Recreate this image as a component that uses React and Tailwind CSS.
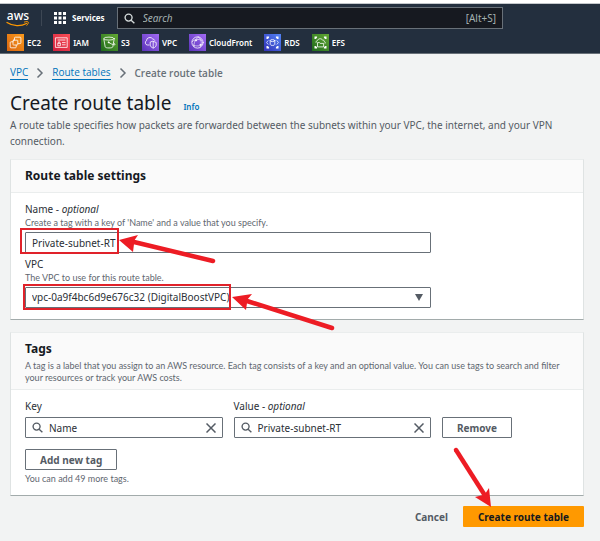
import React from "react";

const stroke = { fill: "none", stroke: "#fff", strokeWidth: 0.8, strokeLinecap: "round", strokeLinejoin: "round" };

function ServiceIcon({ from, to, id, children }) {
  return (
    <svg viewBox="0 0 17 17" className="size-[17px] shrink-0" aria-hidden="true">
      <defs>
        <linearGradient id={id} x1="0" y1="1" x2="1" y2="0">
          <stop offset="0" stopColor={from} />
          <stop offset="1" stopColor={to} />
        </linearGradient>
      </defs>
      <rect width="17" height="17" fill={`url(#${id})`} />
      <g {...stroke}>{children}</g>
    </svg>
  );
}

const corners = (
  <path
    fill="#fff"
    stroke="none"
    d="M2.5 2.5h2.6v1L4.4 4.4 3.5 5.1h-1zM14.5 2.5h-2.6v1l.7.9.9.7h1zM2.5 14.5h2.6v-1l-.7-.9-.9-.7h-1zM14.5 14.5h-2.6v-1l.7-.9.9-.7h1z"
  />
);

const services = [
  {
    name: "EC2",
    from: "#d8640f",
    to: "#fa9a1c",
    art: (
      <>
        <path d="M7.5 6V4a.8.8 0 0 1 .8-.8h4.800a.8.8 0 0 1 .8.8v4.800a.8.8 0 0 1-.8.8h-2" />
        <rect x="6" y="6.2" width="4.8" height="4.8" rx=".6" />
        <path d="M6 7.8H4a.8.8 0 0 0-.8.8V13a.8.8 0 0 0 .8.8h4.400a.8.8 0 0 0 .8-.8v-1.800" />
      </>
    ),
  },
  {
    name: "IAM",
    from: "#cf1f3c",
    to: "#fb4f57",
    art: (
      <>
        <rect x="2.8" y="3.8" width="11.4" height="9.6" />
        <path d="M5 6h7M9.4 8.6h2.8M9.4 10.8h2.8" />
        <path d="M4.8 11.4V9.2h2.6v2.2zM5.4 9.2v-.8a.7.7 0 0 1 1.4 0v.8" />
      </>
    ),
  },
  {
    name: "S3",
    from: "#1f6a1c",
    to: "#63a834",
    art: (
      <>
        <ellipse cx="8" cy="4.6" rx="5.2" ry="1.5" />
        <path d="M2.8 4.8l1.4 8.1c.3 1.4 7.3 1.4 7.6 0l1.4-8.1" />
        <path d="M7.6 8.4c2 1.4 4.6 2.4 6.2 2.4.8-.2-.2-1.4-1.2-2" />
        <circle cx="7.6" cy="8.3" r=".5" fill="#fff" />
      </>
    ),
  },
  {
    name: "VPC",
    from: "#5a32b8",
    to: "#a26bf5",
    art: (
      <>
        <path d="M7 11H5.200A2.300 2.300 0 0 1 4.400 6.800 3.500 3.500 0 0 1 10.800 5 2.300 2.300 0 0 1 12.800 6.400" />
        <path d="M11.200 7.300l3 1.200v2.500c0 1.500-1.400 2.400-3 3.200-1.600-.8-3-1.700-3-3.200V8.500z" />
        <path d="M11.200 7.600v6" />
      </>
    ),
  },
  {
    name: "CloudFront",
    from: "#5a32b8",
    to: "#a26bf5",
    art: (
      <>
        <circle cx="8.500" cy="8.500" r="5.600" />
        <path d="M3 7.800c2-2.600 7-3.400 9.600-1.200M5 12.800c-.4-3.600 1-7.600 4.400-9.800M9.500 3c3.400 3 3.600 7.400 1.500 10.400M4.200 11c3 1.600 7 1.300 9.600-1" strokeWidth=".6" />
        <circle cx="7" cy="6.500" r=".7" fill="#fff" strokeWidth=".4" />
        <circle cx="11.400" cy="10.800" r=".7" fill="#fff" strokeWidth=".4" />
      </>
    ),
  },
  {
    name: "RDS",
    from: "#3230b6",
    to: "#5285f5",
    art: (
      <>
        {corners}
        <ellipse cx="8.500" cy="6.600" rx="2.300" ry="1" />
        <path d="M6.200 6.600v3.800c0 1.400 4.600 1.400 4.600 0V6.600" />
        <path d="M4 6.800L2.600 8.500 4 10.200M13 6.800l1.400 1.700-1.400 1.700" strokeWidth=".7" />
      </>
    ),
  },
  {
    name: "EFS",
    from: "#1f6a1c",
    to: "#63a834",
    art: (
      <>
        {corners}
        <path d="M4 8.400c0-1.300.8-1.700 1.400-1.800C6 4.400 9.600 4 10.600 6.200c1.200-.2 1.700.5 1.800 1.500 1 .2 1 1 .8 1.500" />
        <path d="M5.500 12.500V8.600h2l.7.800h3.400v3.100z" />
      </>
    ),
  },
];

function AwsLogo() {
  return (
    <a href="#home" aria-label="AWS home" className="flex w-6 flex-col items-center">
      <span className="text-xs leading-[11px] font-medium text-white">aws</span>
      <svg viewBox="0 0 24 6" className="h-[6px] w-6" aria-hidden="true">
        <path d="M1 1.500C7 5.500 15 5.500 20.500 2.500" fill="none" stroke="#f90" strokeWidth="1.300" strokeLinecap="round" />
        <path d="M18.500 1c2-.6 3.400-.5 3.700 0s-.1 2-1.300 3.300" fill="none" stroke="#f90" strokeWidth="1" strokeLinecap="round" />
      </svg>
    </a>
  );
}

function SearchGlyph({ className }) {
  return (
    <svg viewBox="0 0 12 12" className={className} fill="none" stroke="currentColor" aria-hidden="true">
      <circle cx="5" cy="5" r="3.800" strokeWidth="1.500" />
      <path d="M7.800 7.800L11.300 11.300" strokeWidth="1.500" />
    </svg>
  );
}

function Chevron() {
  return (
    <svg viewBox="0 0 8 12" className="h-3 w-2 text-[#687078]" fill="none" stroke="currentColor" strokeWidth="1.500" aria-hidden="true">
      <path d="M1.500 1.500L6 6l-4.500 4.500" />
    </svg>
  );
}

function Arrow({ className, width, height, shaft, head }) {
  return (
    <svg
      viewBox={`0 0 ${width} ${height}`}
      width={width}
      height={height}
      className={`pointer-events-none absolute z-10 ${className}`}
      aria-hidden="true"
    >
      <path d={shaft} stroke="#ed1c24" strokeWidth="4.500" strokeLinecap="round" />
      <path d={head} fill="#ed1c24" />
    </svg>
  );
}

function Outline({ className }) {
  return <span className={`pointer-events-none absolute border-2 border-[#e0222a] ${className}`} />;
}

function Hint({ children }) {
  return <p className="font-['Lato',sans-serif] text-[9px] leading-[12px] text-[#5f6770]">{children}</p>;
}

function Card({ title, description, children }) {
  return (
    <section className="border border-x-[#dfe3e3] border-t-[#eaeded] border-b-[#a2abab] bg-white">
      <header className="border-b border-[#eaeded] bg-[#fafafa] px-3.5 py-[5px]">
        <h2 className="text-xs leading-[22px] font-bold text-[#16191f]">{title}</h2>
        {description && <Hint>{description}</Hint>}
      </header>
      <div className="px-3.5">{children}</div>
    </section>
  );
}

function TagInput({ id, label, value }) {
  return (
    <div className="min-w-0 flex-1">
      <label htmlFor={id} className="block text-[10px] leading-[16px] text-[#2a2f36]">
        {label}
      </label>
      <div className="mt-[3px] flex h-[21px] items-center rounded-[1px] border border-[#687078] bg-white px-1.5 text-[#545b64]">
        <SearchGlyph className="size-[11px] shrink-0" />
        <input id={id} defaultValue={value} className="ml-[6px] w-full min-w-0 flex-1 text-[10px] leading-[16px] text-[#2a2f36] outline-none" />
        <button type="button" aria-label={`Clear ${value}`} className="shrink-0">
          <svg viewBox="0 0 10 10" className="size-[10px]" stroke="currentColor" strokeWidth="1.500" aria-hidden="true">
            <path d="M.5.5l9 9M9.500.5l-9 9" />
          </svg>
        </button>
      </div>
    </div>
  );
}

const fieldStyle = "block h-[21px] w-full rounded-[1px] border border-[#687078] bg-white px-1.5 text-[10px] text-[#2a2f36] outline-none";
const labelStyle = "block text-[10px] leading-[16px] text-[#2a2f36]";
const buttonStyle = "h-[21px] rounded-[1px] border border-[#687078] bg-white text-[10px] leading-[18px] font-bold text-[#545b64]";

export default function App() {
  return (
    <div className="min-h-screen bg-[#f2f3f3] font-['Noto_Sans','Open_Sans',sans-serif] text-[#16191f]">
      <header className="border-t-3 border-white">
        <div className="border-y border-t-[#c4c8cc] border-b-[#687078] bg-[#232f3e]">
          <div className="flex h-7 items-center pl-[6px]">
            <AwsLogo />
            <span className="ml-[11px] h-4 w-px bg-[#3d4754]" />
            <button type="button" className="ml-3 flex items-center gap-1.5 text-[8px] font-bold text-white">
              <svg viewBox="0 0 12 12" className="size-3" fill="currentColor" aria-hidden="true">
                <path d="M0 0h3v3H0zM4.500 0h3v3h-3zM9 0h3v3H9zM0 4.500h3v3H0zM4.500 4.500h3v3h-3zM9 4.500h3v3H9zM0 9h3v3H0zM4.500 9h3v3h-3zM9 9h3v3H9z" />
              </svg>
              Services
            </button>
            <label className="mr-[97px] ml-3 flex h-[22px] min-w-0 flex-1 items-center border border-[#687078] bg-[#161920] px-1.5 text-[#d5dbdb]">
              <SearchGlyph className="size-[11px] shrink-0" />
              <input
                aria-label="Search"
                placeholder="Search"
                className="ml-2 w-full min-w-0 flex-1 text-[10px] italic outline-none placeholder:text-[#a3b1b1]"
              />
              <span className="text-[10px] text-[#a3b1b1]">[Alt+S]</span>
            </label>
          </div>
          <nav className="flex h-[21px] items-center gap-3 pl-[7px]">
            {services.map((s) => (
              <a key={s.name} href={`#${s.name}`} className="flex items-center gap-[3px] text-[8px] leading-[17px] font-semibold text-white">
                <ServiceIcon id={`g-${s.name}`} from={s.from} to={s.to}>
                  {s.art}
                </ServiceIcon>
                {s.name}
              </a>
            ))}
          </nav>
        </div>
      </header>

      <main className="pr-4 pb-3 pl-[10px]">
        <nav aria-label="Breadcrumb" className="flex items-center gap-2 pt-[11px] font-['Open_Sans',sans-serif] text-[10px] leading-[14px]">
          <a href="#vpc" className="border-b border-[#0073bb] text-[#0073bb]">VPC</a>
          <Chevron />
          <a href="#route-tables" className="border-b border-[#0073bb] text-[#0073bb]">Route tables</a>
          <Chevron />
          <span className="font-semibold text-[#687078]">Create route table</span>
        </nav>

        <div className="mt-[10px] flex items-baseline gap-3">
          <h1 className="text-[19px] leading-[26px]">Create route table</h1>
          <a href="#info" className="text-[8px] font-semibold text-[#0073bb]">Info</a>
        </div>
        <p className="mt-px mb-[10px] text-[10px] leading-[16px] text-[#545b64]">
          A route table specifies how packets are forwarded between the subnets within your VPC, the internet, and your VPN connection.
        </p>

        <Card title="Route table settings">
          <div className="max-w-[406px] pt-2 pb-[11px]">
            <label htmlFor="name" className={labelStyle}>
              Name - <i>optional</i>
            </label>
            <Hint>Create a tag with a key of 'Name' and a value that you specify.</Hint>
            <div className="relative mt-[3px]">
              <input id="name" defaultValue="Private-subnet-RT" className={fieldStyle} />
              <Outline className="-top-1 -left-[5px] h-[26px] w-[99px]" />
              <Arrow className="top-0 left-[94px]" width={100} height={34} shaft="M15 10L94 29" head="M0 8L19 3 15 9 15 12 14 20z" />
            </div>

            <label htmlFor="vpc" className={`${labelStyle} mt-[3px]`}>
              VPC
            </label>
            <Hint>The VPC to use for this route table.</Hint>
            <div className="relative mt-[3px]">
              <select id="vpc" className={`${fieldStyle} appearance-none`}>
                <option>vpc-0a9f4bc6d9e676c32 (DigitalBoostVPC)</option>
              </select>
              <span className="pointer-events-none absolute top-[7px] right-2 border-x-4 border-t-[7px] border-x-transparent border-t-[#545b64]" />
              <Outline className="-top-[3px] -left-[2px] h-[26px] w-[208px]" />
              <Arrow className="top-0 left-[207px]" width={106} height={46} shaft="M15 14L100 41" head="M0 10L20 7 15 13 15 16 14 23z" />
            </div>
          </div>
        </Card>

        <div className="mt-3">
          <Card
            title="Tags"
            description="A tag is a label that you assign to an AWS resource. Each tag consists of a key and an optional value. You can use tags to search and filter your resources or track your AWS costs."
          >
            <div className="pt-2 pb-[10px]">
              <div className="flex items-end gap-[11px]">
                <div className="flex max-w-[406px] min-w-0 flex-1 gap-[11px]">
                  <TagInput id="key" label="Key" value="Name" />
                  <TagInput id="value" label={<>Value - <i>optional</i></>} value="Private-subnet-RT" />
                </div>
                <button type="button" className={`${buttonStyle} px-3.5`}>Remove</button>
              </div>
              <button type="button" className={`${buttonStyle} mt-[11px] mb-[3px] px-3.5`}>Add new tag</button>
              <Hint>You can add 49 more tags.</Hint>
            </div>
          </Card>
        </div>

        <footer className="mt-[10px] flex items-center justify-end gap-[15px]">
          <button type="button" className="text-[10px] leading-[18px] font-bold text-[#545b64]">Cancel</button>
          <div className="relative flex">
            <button type="button" className="h-[21px] rounded-[1px] bg-[#ff9900] px-[15px] text-[10px] leading-[18px] font-bold text-[#16191f]">
              Create route table
            </button>
            <Arrow className="-top-[61px] -left-[11px]" width={44} height={64} shaft="M4 5L32 49" head="M39 62L23 52 31 50 33 49 37 43z" />
          </div>
        </footer>
      </main>
    </div>
  );
}
